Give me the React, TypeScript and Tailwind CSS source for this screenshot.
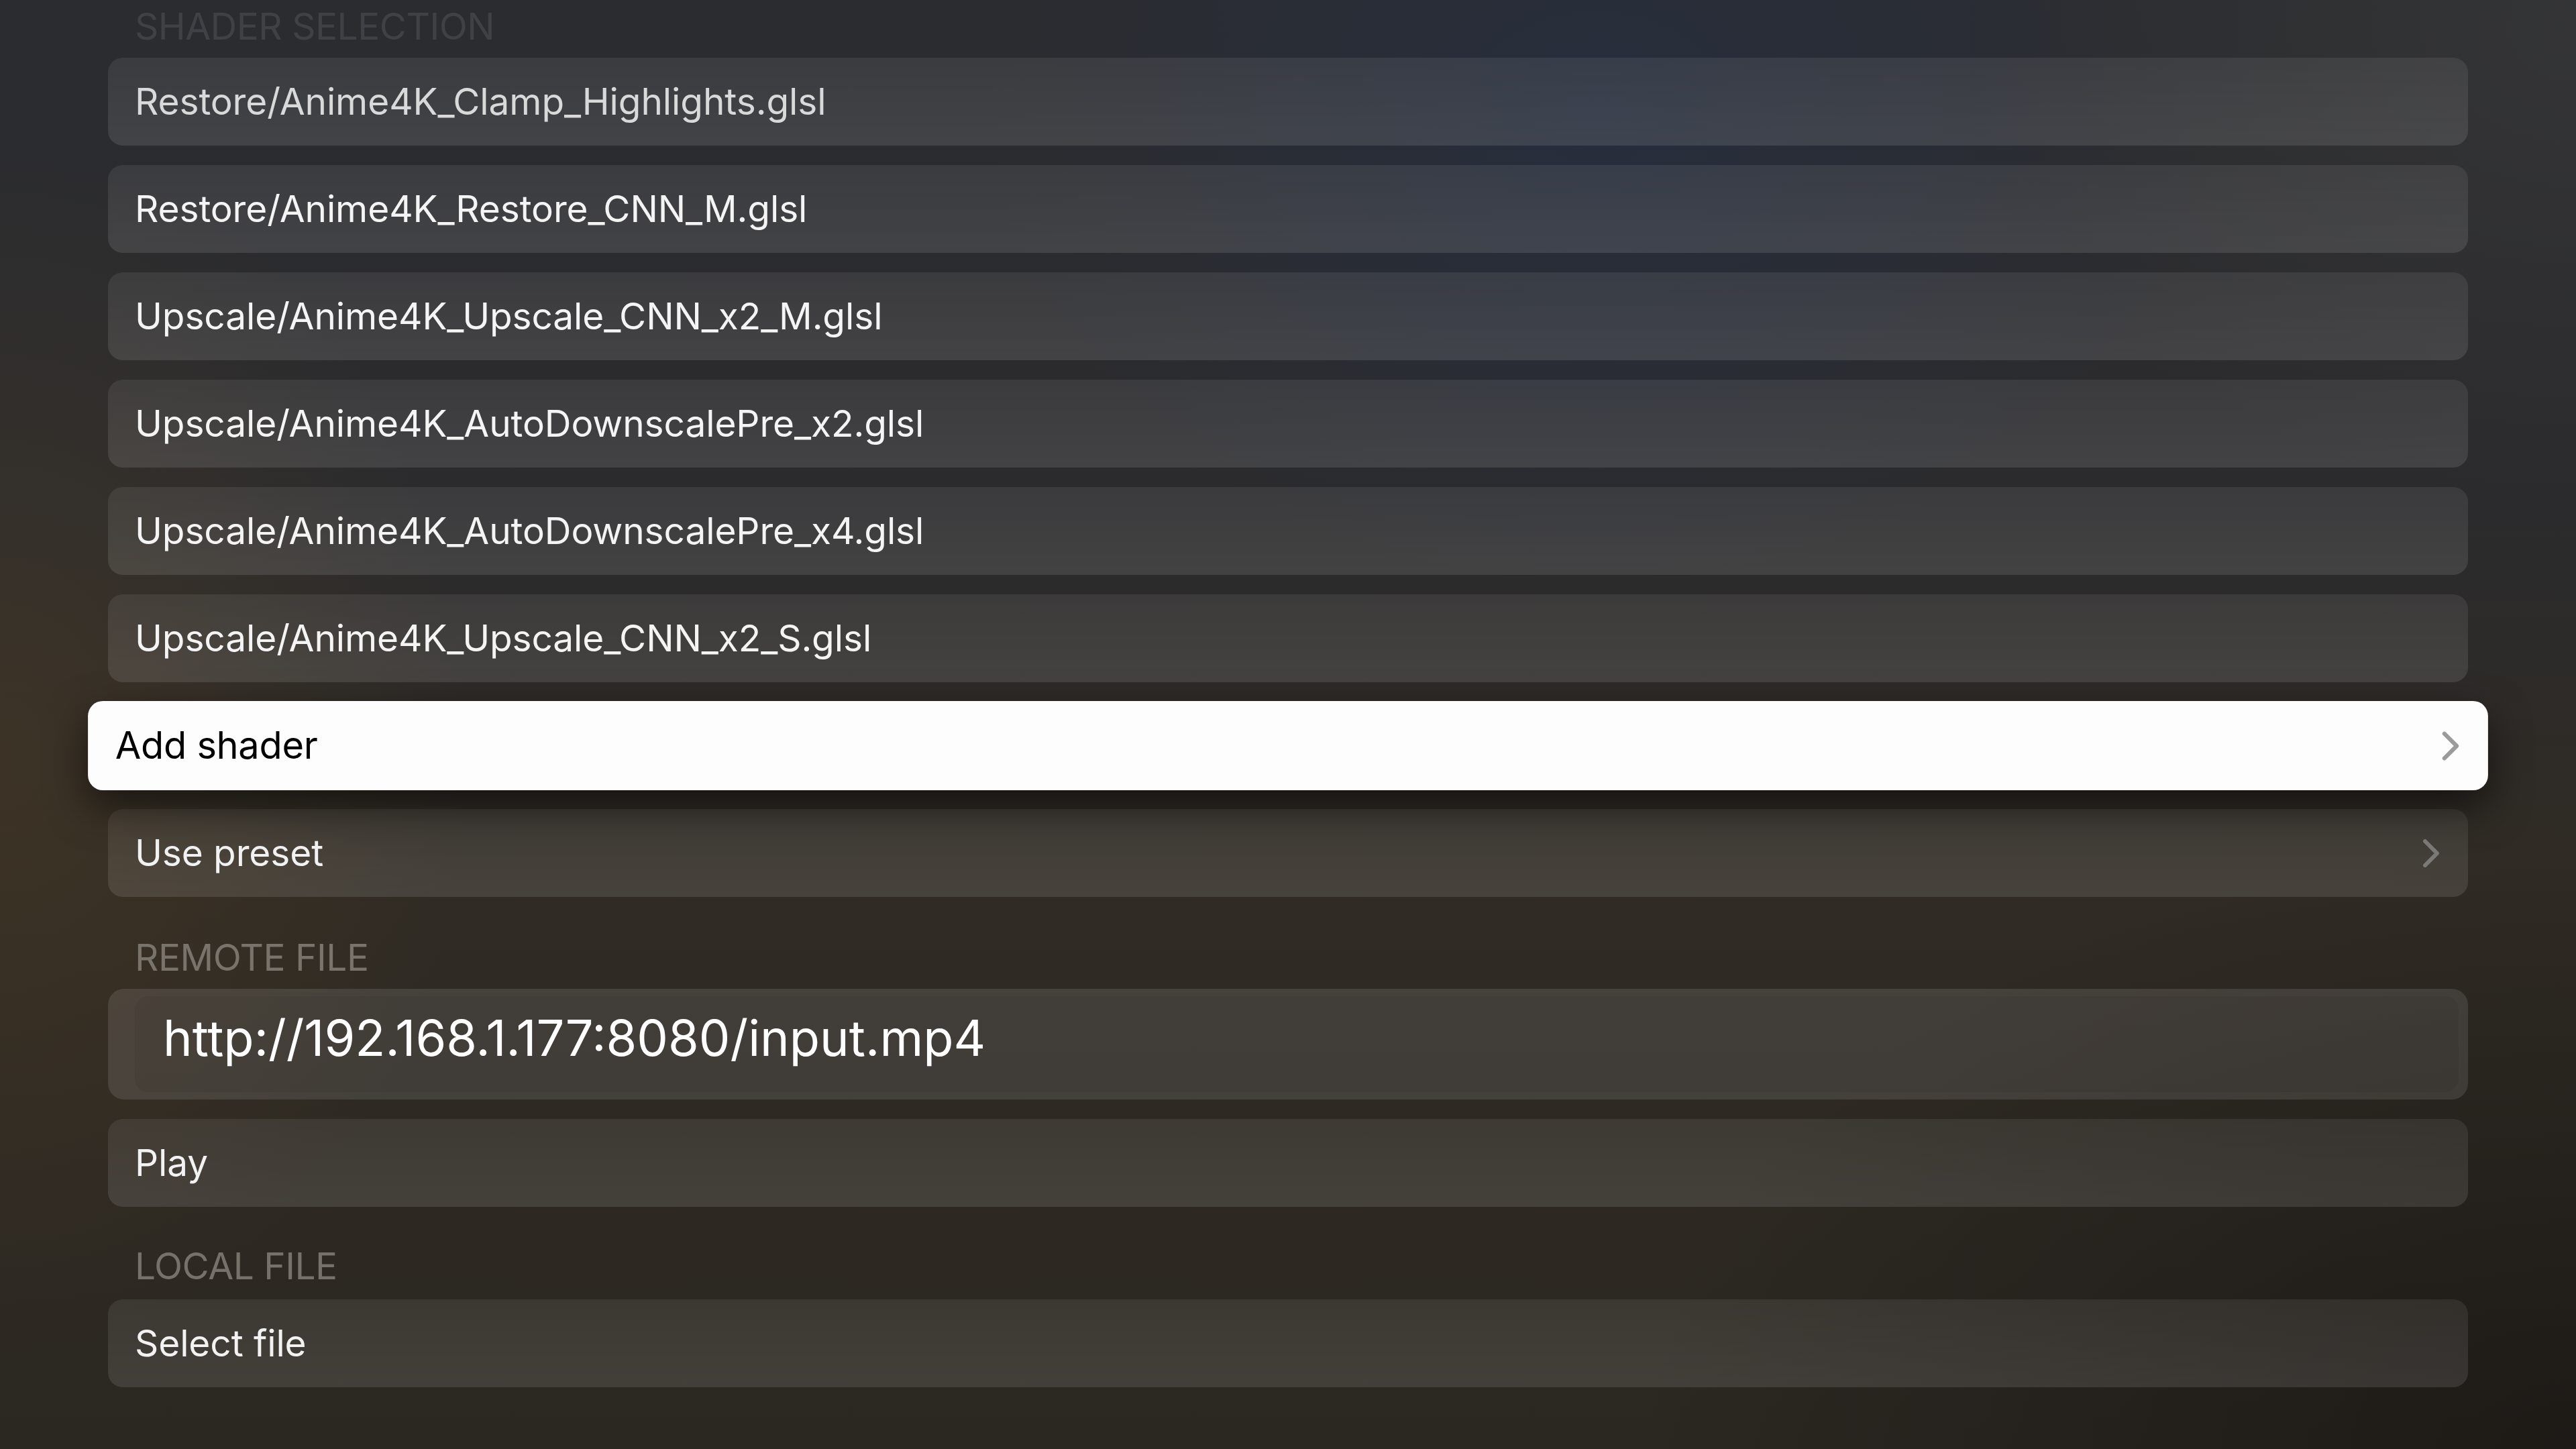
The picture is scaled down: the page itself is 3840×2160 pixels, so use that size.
import React from "react";

function Chevron({ color }: { color: string }) {
  return (
    <svg width="26" height="44" viewBox="0 0 26 44" fill="none">
      <polyline
        points="4,4 22,22 4,40"
        stroke={color}
        strokeWidth="6"
        strokeLinecap="round"
        strokeLinejoin="round"
      />
    </svg>
  );
}

function Row({
  label,
  chevron,
  textClass,
}: {
  label: string;
  chevron?: boolean;
  textClass?: string;
}) {
  return (
    <div className="h-[131px] rounded-[22px] bg-linear-to-b from-white/[0.075] to-white/[0.11] flex items-center justify-between pl-[40px] pr-[42px]">
      <span className={`text-[55px] leading-[55px] tracking-[-0.1px] ${textClass ?? "text-[#f2f2f2]"}`}>
        {label}
      </span>
      {chevron ? <Chevron color="#7c7a76" /> : null}
    </div>
  );
}

function FocusedRow({ label }: { label: string }) {
  return (
    <div className="h-[131px] scale-[1.017] rounded-[22px] bg-[#fdfdfd] shadow-[0_24px_60px_rgba(0,0,0,0.55)] flex items-center justify-between pl-[40px] pr-[42px]">
      <span className="text-[55px] leading-[55px] tracking-[-0.3px] text-black">{label}</span>
      <Chevron color="#9b9b9b" />
    </div>
  );
}

function Header({ label, className }: { label: string; className?: string }) {
  return (
    <div className={`pl-[40px] text-[55px] leading-[55px] tracking-[-0.5px] ${className ?? ""}`}>{label}</div>
  );
}

export default function App() {
  const shaders = [
    "Restore/Anime4K_Clamp_Highlights.glsl",
    "Restore/Anime4K_Restore_CNN_M.glsl",
    "Upscale/Anime4K_Upscale_CNN_x2_M.glsl",
    "Upscale/Anime4K_AutoDownscalePre_x2.glsl",
    "Upscale/Anime4K_AutoDownscalePre_x4.glsl",
    "Upscale/Anime4K_Upscale_CNN_x2_S.glsl",
  ];
  return (
    <div className="w-[3840px] h-[2160px] overflow-hidden font-['Inter',sans-serif] bg-[#2a2823] bg-[image:radial-gradient(ellipse_900px_700px_at_62%_8%,rgba(38,46,62,0.85),transparent),radial-gradient(ellipse_700px_900px_at_0%_52%,rgba(72,58,38,0.55),transparent),radial-gradient(ellipse_900px_700px_at_100%_2%,rgba(58,58,58,0.6),transparent),radial-gradient(ellipse_1400px_900px_at_100%_100%,rgba(20,18,16,0.6),transparent),linear-gradient(to_bottom,#2b2c30_0%,#2b2b2d_35%,#302b24_60%,#2b2721_100%)]">
      <div className="px-[161px]">
        <Header label="SHADER SELECTION" className="pt-[12px] h-[86px] text-[#404147]" />
        <div className="flex flex-col gap-[29px]">
          {shaders.map((s, i) => (
            <Row key={s} label={s} textClass={i === 0 ? "text-[#d9d9da]" : "text-[#f4f4f4]"} />
          ))}
          <FocusedRow label="Add shader" />
          <Row label="Use preset" chevron />
        </div>
        <Header label="REMOTE FILE" className="mt-[63px] mb-[19px] text-[#78746c]" />
        <div className="h-[165px] rounded-[24px] bg-white/[0.11] p-[11px_14px_11px_40px] flex">
          <div className="flex-1 rounded-[20px] bg-black/[0.05] flex items-center pl-[42px] pb-[20px]">
            <span className="text-[74px] leading-[74px] tracking-[0px] text-white">
              http://192.168.1.177:8080/input.mp4
            </span>
          </div>
        </div>
        <div className="mt-[29px] flex flex-col">
          <Row label="Play" />
        </div>
        <Header label="LOCAL FILE" className="mt-[61px] mb-[22px] text-[#76726a]" />
        <Row label="Select file" />
      </div>
    </div>
  );
}
